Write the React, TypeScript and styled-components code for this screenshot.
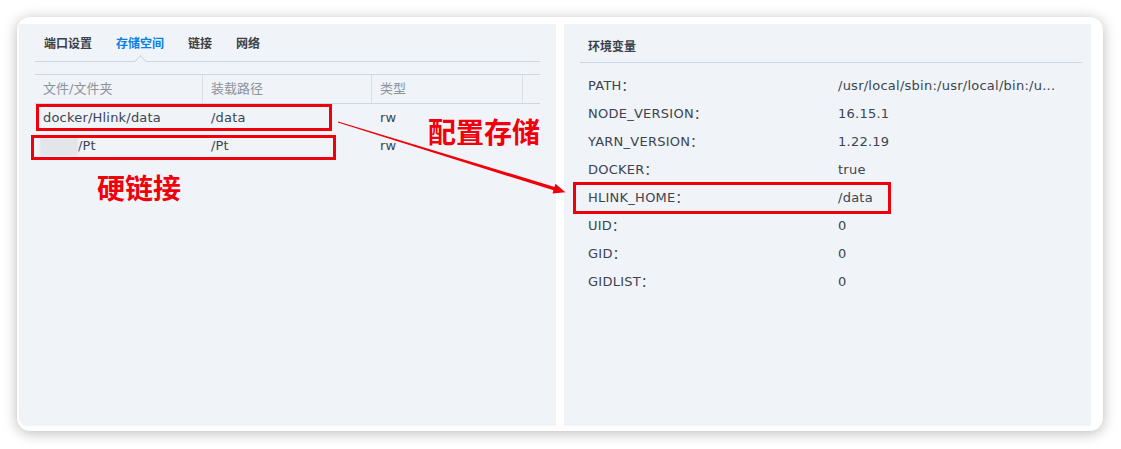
import React from 'react';
import styled, { createGlobalStyle } from 'styled-components';

const Global = createGlobalStyle`
  html, body { margin: 0; padding: 0; background: #ffffff; }
  body {
    font-family: "DejaVu Sans", "Noto Sans CJK SC", sans-serif;
    -webkit-font-smoothing: antialiased;
  }
  * { box-sizing: border-box; }
`;

const Page = styled.div`
  width: 1121px;
  height: 449px;
  padding: 17px 0 0 17px;
  overflow: hidden;
`;

const Card = styled.div`
  position: relative;
  width: 1086px;
  height: 414px;
  background: #ffffff;
  border-radius: 13px;
  box-shadow: 0 2px 14px rgba(0, 0, 0, 0.28);
  padding: 7px 12px 5px 2px;
  display: flex;
  gap: 8px;
  overflow: hidden;
`;

const Panel = styled.section<{ $w: number }>`
  width: ${p => p.$w}px;
  height: 402px;
  background: #f0f3f7;
  flex: none;
`;

const LeftPanel = styled(Panel)`
  padding: 0 16px;
  border-bottom-left-radius: 8px;
`;

const RightPanel = styled(Panel)`
  padding: 0 9px 0 16px;
`;

const TabBar = styled.nav`
  display: flex;
  gap: 24px;
  padding: 11px 0 10px 9px;
  border-bottom: 1px solid #cdd7e1;
`;

const Tab = styled.div<{ $active?: boolean }>`
  position: relative;
  font-family: "Noto Sans CJK SC", sans-serif;
  font-size: 12px;
  line-height: 16px;
  font-weight: 700;
  color: ${p => (p.$active ? '#0a7fe6' : '#39414a')};
  &::after {
    content: '';
    display: ${p => (p.$active ? 'block' : 'none')};
    position: absolute;
    left: 50%;
    bottom: -14.5px;
    width: 8px;
    height: 8px;
    margin-left: -4px;
    background: #f0f3f7;
    border-top: 1px solid #cdd7e1;
    border-left: 1px solid #cdd7e1;
    transform: rotate(45deg);
  }
`;

const Table = styled.div`
  margin-top: 12px;
  border-top: 1px solid #cdd7e1;
`;

const cols = '167px 169px 151px 1fr';

const HeadRow = styled.div`
  display: grid;
  grid-template-columns: ${cols};
  height: 29px;
  border-bottom: 1px solid #cdd7e1;
`;

const HeadCell = styled.div<{ $first?: boolean }>`
  display: flex;
  align-items: center;
  padding-left: 8px;
  border-left: ${p => (p.$first ? 'none' : '1px solid #d6dee6')};
  font-size: 13px;
  line-height: 16px;
  color: #8b939c;
`;

const Row = styled.div`
  display: grid;
  grid-template-columns: ${cols};
  height: 28px;
`;

const Cell = styled.div<{ $pad?: number }>`
  display: flex;
  align-items: center;
  padding-left: ${p => p.$pad ?? 8}px;
  font-size: 13px;
  line-height: 16px;
  letter-spacing: 0.2px;
  color: #3b4550;
  white-space: nowrap;
`;

const Blurred = styled.span`
  display: inline-block;
  width: 38px;
  height: 20px;
  margin-left: -3px;
  background: #e2e5e9;
  filter: blur(1px);
`;

const Title = styled.h3`
  margin: 0;
  padding: 14px 0 8px 8px;
  font-family: "Noto Sans CJK SC", sans-serif;
  font-size: 12px;
  line-height: 16px;
  font-weight: 700;
  color: #39414a;
  border-bottom: 1px solid #cdd7e1;
`;

const EnvList = styled.div`
  margin-top: 9px;
`;

const EnvRow = styled.div`
  display: grid;
  grid-template-columns: 250px 1fr;
  height: 28px;
  align-items: center;
  padding-left: 8px;
  font-size: 13px;
  line-height: 16px;
  letter-spacing: 0.25px;
  color: #3b4550;
  white-space: nowrap;
  & > span {
    display: block;
    height: 16px;
    line-height: 16px;
  }
`;

const Overlay = styled.div`
  position: absolute;
  inset: 0;
  pointer-events: none;
`;

const RedBox = styled.div<{ $x: number; $y: number; $w: number; $h: number }>`
  position: absolute;
  left: ${p => p.$x}px;
  top: ${p => p.$y}px;
  width: ${p => p.$w}px;
  height: ${p => p.$h}px;
  border: 3px solid #f0000a;
`;

const Note = styled.div<{ $x: number; $y: number }>`
  position: absolute;
  left: ${p => p.$x}px;
  top: ${p => p.$y}px;
  font-family: "Noto Sans CJK SC", sans-serif;
  font-size: 28px;
  line-height: 28px;
  font-weight: 700;
  color: #f0000a;
  white-space: nowrap;
`;

const ArrowSvg = styled.svg`
  position: absolute;
  left: 0;
  top: 0;
  width: 100%;
  height: 100%;
  overflow: visible;
`;

const env: [string, string][] = [
  ['PATH', '/usr/local/sbin:/usr/local/bin:/u...'],
  ['NODE_VERSION', '16.15.1'],
  ['YARN_VERSION', '1.22.19'],
  ['DOCKER', 'true'],
  ['HLINK_HOME', '/data'],
  ['UID', '0'],
  ['GID', '0'],
  ['GIDLIST', '0'],
];

export default function App() {
  return (
    <Page>
      <Global />
      <Card>
        <LeftPanel $w={537}>
          <TabBar>
            <Tab>端口设置</Tab>
            <Tab $active>存储空间</Tab>
            <Tab>链接</Tab>
            <Tab>网络</Tab>
          </TabBar>
          <Table>
            <HeadRow>
              <HeadCell $first>文件/文件夹</HeadCell>
              <HeadCell>装载路径</HeadCell>
              <HeadCell>类型</HeadCell>
              <HeadCell />
            </HeadRow>
            <Row>
              <Cell>docker/Hlink/data</Cell>
              <Cell $pad={9}>/data</Cell>
              <Cell $pad={9}>rw</Cell>
              <Cell />
            </Row>
            <Row>
              <Cell>
                <Blurred />
                /Pt
              </Cell>
              <Cell $pad={9}>/Pt</Cell>
              <Cell $pad={9}>rw</Cell>
              <Cell />
            </Row>
          </Table>
        </LeftPanel>
        <RightPanel $w={527}>
          <Title>环境变量</Title>
          <EnvList>
            {env.map(([k, v]) => (
              <EnvRow key={k}>
                <span>{k}：</span>
                <span>{v}</span>
              </EnvRow>
            ))}
          </EnvList>
        </RightPanel>
        <Overlay>
          <RedBox $x={19} $y={87} $w={296} $h={27} />
          <RedBox $x={14} $y={118} $w={305} $h={25} />
          <RedBox $x={556} $y={165} $w={318} $h={32} />
          <Note $x={411} $y={100}>配置存储</Note>
          <Note $x={80} $y={156}>硬链接</Note>
          <ArrowSvg>
            <g transform="translate(321 105) rotate(17.14)" fill="#f0000a">
              <polygon points="0,-0.5 227,-1.8 227,1.8 0,0.5" />
              <polygon points="226,-5 238,0 226,5" />
            </g>
          </ArrowSvg>
        </Overlay>
      </Card>
    </Page>
  );
}
